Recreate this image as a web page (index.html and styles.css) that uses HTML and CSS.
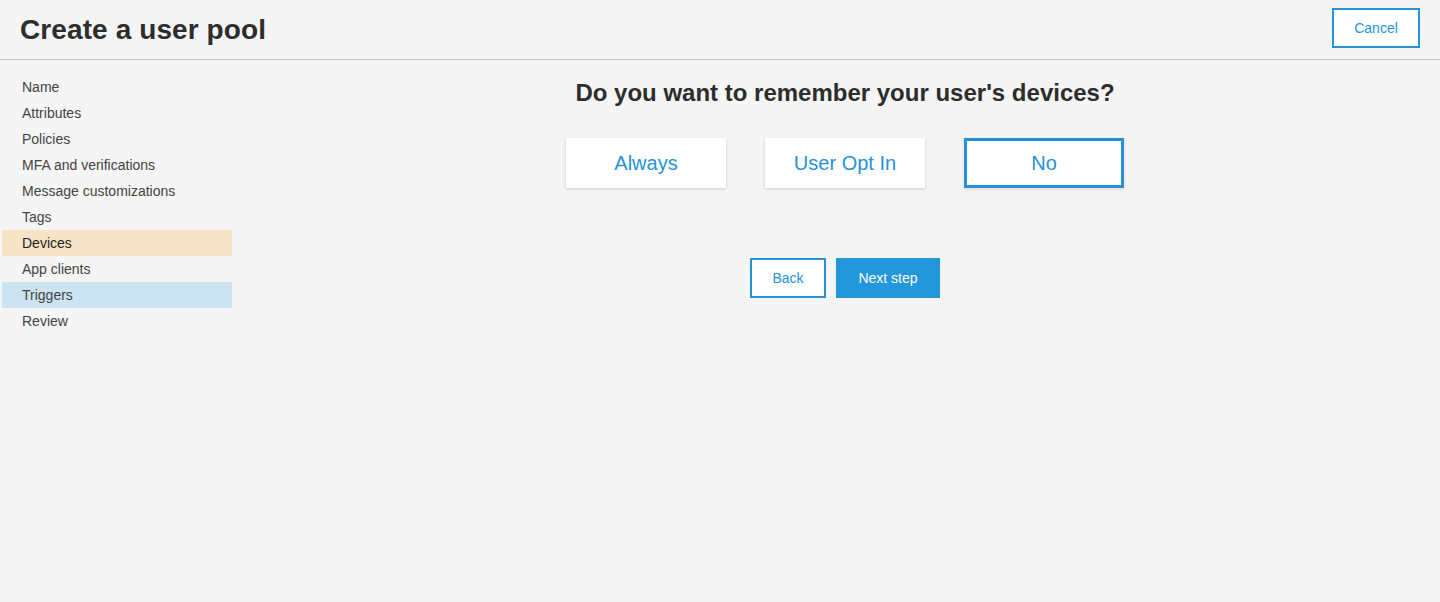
FILE: index.html
```html
<!DOCTYPE html>
<html>
<head>
<meta charset="utf-8">
<link rel="stylesheet" href="styles.css">
</head>
<body>
<header class="header">
  <h1 class="title">Create a user pool</h1>
  <button class="btn btn-outline cancel">Cancel</button>
</header>
<div class="layout">
  <nav class="sidebar">
    <div class="nav-item">Name</div>
    <div class="nav-item">Attributes</div>
    <div class="nav-item">Policies</div>
    <div class="nav-item">MFA and verifications</div>
    <div class="nav-item">Message customizations</div>
    <div class="nav-item">Tags</div>
    <div class="nav-item active">Devices</div>
    <div class="nav-item">App clients</div>
    <div class="nav-item hover">Triggers</div>
    <div class="nav-item">Review</div>
  </nav>
  <main class="main">
    <h2 class="question">Do you want to remember your user's devices?</h2>
    <div class="options">
      <div class="option">Always</div>
      <div class="option">User Opt In</div>
      <div class="option selected">No</div>
    </div>
    <div class="actions">
      <button class="btn btn-outline back">Back</button>
      <button class="btn btn-primary next">Next step</button>
    </div>
  </main>
</div>
</body>
</html>
```
FILE: styles.css
```css
* { box-sizing: border-box; }
html, body { margin: 0; padding: 0; }
body {
  background: #f4f5f4;
  font-family: "Liberation Sans", Arial, sans-serif;
  color: #444;
  height: 602px;
}
.header {
  height: 60px;
  border-bottom: 1px solid #c8c8c8;
  display: flex;
  align-items: center;
  justify-content: space-between;
  padding: 0 20px;
}
.title {
  margin: 0;
  font-size: 28px;
  font-weight: bold;
  color: #2d2d2d;
  letter-spacing: 0.1px;
}
.btn {
  font-family: "Liberation Sans", Arial, sans-serif;
  font-size: 14px;
  height: 40px;
  cursor: pointer;
  padding: 0;
}
.btn-outline {
  background: #fff;
  border: 2px solid #2593d8;
  color: #2593d8;
}
.btn-primary {
  background: #2397db;
  border: none;
  color: #fff;
}
.cancel {
  width: 88px;
  margin-top: -3px;
}
.layout {
  display: flex;
}
.sidebar {
  width: 230px;
  margin-left: 2px;
  padding-top: 14px;
  flex-shrink: 0;
}
.nav-item {
  height: 26px;
  line-height: 26px;
  padding-left: 20px;
  font-size: 14px;
  color: #444;
}
.nav-item.active {
  background: #f7e3c5;
  color: #222;
}
.nav-item.hover {
  background: #cce3f1;
}
.main {
  flex: 1;
  margin-left: 18px;
  display: flex;
  flex-direction: column;
  align-items: center;
}
.question {
  margin: 19px 0 0 0;
  font-size: 24px;
  font-weight: bold;
  color: #2d2d2d;
  line-height: 28px;
}
.options {
  display: flex;
  gap: 39px;
  margin-top: 31px;
}
.option {
  width: 160px;
  height: 50px;
  background: #fff;
  box-shadow: 0 1px 3px rgba(0,0,0,0.18);
  color: #2593d8;
  font-size: 20px;
  display: flex;
  align-items: center;
  justify-content: center;
}
.option.selected {
  border: 3px solid #2593d8;
  box-shadow: 0 1px 3px rgba(0,0,0,0.12);
}
.actions {
  display: flex;
  gap: 10px;
  margin-top: 70px;
}
.back { width: 76px; }
.next { width: 104px; }
```
